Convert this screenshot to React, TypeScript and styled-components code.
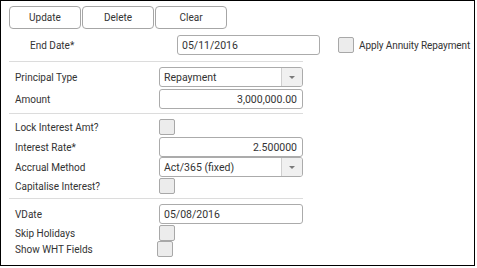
import React from "react";
import styled, { createGlobalStyle } from "styled-components";

const Global = createGlobalStyle`
  html, body { margin: 0; padding: 0; background: #fff; }
  body { font-family: Roboto, "Liberation Sans", sans-serif; }
`;

const Panel = styled.div`
  box-sizing: border-box;
  width: 475px;
  height: 266px;
  border: 1px solid #000;
  padding: 5px 0 0 8px;
  font-family: Roboto, "Liberation Sans", sans-serif;
  font-size: 10px;
  color: #333;
`;

const Toolbar = styled.div`
  display: flex;
  gap: 1px;
  height: 23px;
`;

const Button = styled.button`
  box-sizing: border-box;
  width: 72px;
  height: 23px;
  margin: 0;
  padding: 0;
  background: #fff;
  border: 1px solid #a6a6a6;
  border-radius: 4px;
  font-family: inherit;
  font-size: 10px;
  color: #333;
`;

const TopRow = styled.div`
  display: grid;
  grid-template-columns: 168px 143px 18px 16px 5px auto;
  align-items: center;
  height: 20px;
  margin-top: 6px;
`;

const TopLabel = styled.span`
  padding-left: 21px;
`;

const CheckCaption = styled.span`
  white-space: nowrap;
  letter-spacing: -0.1px;
`;

const Separator = styled.div<{ $top?: number }>`
  width: 294px;
  height: 1px;
  background: #dcdcdc;
  margin-top: ${(p) => p.$top ?? 0}px;
`;

const Section = styled.div<{ $pt: number; $pb: number }>`
  display: flex;
  flex-direction: column;
  padding-top: ${(p) => p.$pt}px;
  padding-bottom: ${(p) => p.$pb}px;
`;

const Row = styled.div<{ $h: number; $mt?: number }>`
  display: grid;
  grid-template-columns: 150px 144px;
  align-items: center;
  height: ${(p) => p.$h}px;
  margin-top: ${(p) => p.$mt ?? 0}px;
`;

const Label = styled.span`
  padding-left: 6px;
  white-space: nowrap;
`;

const Input = styled.div<{ $align?: string }>`
  box-sizing: border-box;
  height: 20px;
  border: 1px solid #ababab;
  border-radius: 3px;
  background: #fff;
  display: flex;
  align-items: center;
  justify-content: ${(p) => (p.$align === "right" ? "flex-end" : "flex-start")};
  padding: 0 5px 0 4px;
  font-size: 10.5px;
  color: #333;
`;

const Select = styled.div`
  box-sizing: border-box;
  height: 20px;
  border: 1px solid #ababab;
  border-radius: 3px;
  background: #fff;
  display: flex;
  align-items: stretch;
  overflow: hidden;
  font-size: 10.5px;
`;

const SelectText = styled.span`
  flex: 1;
  display: flex;
  align-items: center;
  padding-left: 4px;
`;

const SelectArrow = styled.span`
  width: 20px;
  border-left: 1px solid #cfcfcf;
  background: #f0f0f0;
  display: flex;
  align-items: center;
  justify-content: center;
  &::after {
    content: "";
    width: 0;
    height: 0;
    border-left: 3px solid transparent;
    border-right: 3px solid transparent;
    border-top: 3px solid #7a7a7a;
  }
`;

const Check = styled.span<{ $shift?: number }>`
  box-sizing: border-box;
  display: block;
  width: 16px;
  height: 16px;
  border: 1px solid #a8a8a8;
  border-radius: 2px;
  background: #ececec;
  margin-left: ${(p) => p.$shift ?? 0}px;
`;

export default function App() {
  return (
    <>
      <Global />
      <Panel>
        <Toolbar>
          <Button>Update</Button>
          <Button>Delete</Button>
          <Button>Clear</Button>
        </Toolbar>
        <TopRow>
          <TopLabel>End Date*</TopLabel>
          <Input>05/11/2016</Input>
          <span />
          <Check />
          <span />
          <CheckCaption>Apply Annuity Repayment</CheckCaption>
        </TopRow>
        <Separator $top={6} />
        <Section $pt={5} $pb={4}>
          <Row $h={20}>
            <Label>Principal Type</Label>
            <Select>
              <SelectText>Repayment</SelectText>
              <SelectArrow />
            </Select>
          </Row>
          <Row $h={20} $mt={2}>
            <Label>Amount</Label>
            <Input $align="right">3,000,000.00</Input>
          </Row>
        </Section>
        <Separator />
        <Section $pt={3} $pb={3}>
          <Row $h={20}>
            <Label>Lock Interest Amt?</Label>
            <Check />
          </Row>
          <Row $h={20}>
            <Label>Interest Rate*</Label>
            <Input $align="right">2.500000</Input>
          </Row>
          <Row $h={20}>
            <Label>Accrual Method</Label>
            <Select>
              <SelectText>Act/365 (fixed)</SelectText>
              <SelectArrow />
            </Select>
          </Row>
          <Row $h={18}>
            <Label>Capitalise Interest?</Label>
            <Check />
          </Row>
        </Section>
        <Separator />
        <Section $pt={5} $pb={0}>
          <Row $h={20}>
            <Label>VDate</Label>
            <Input>05/08/2016</Input>
          </Row>
          <Row $h={16} $mt={1}>
            <Label>Skip Holidays</Label>
            <Check />
          </Row>
          <Row $h={16}>
            <Label>Show WHT Fields</Label>
            <Check $shift={-2} />
          </Row>
        </Section>
      </Panel>
    </>
  );
}
